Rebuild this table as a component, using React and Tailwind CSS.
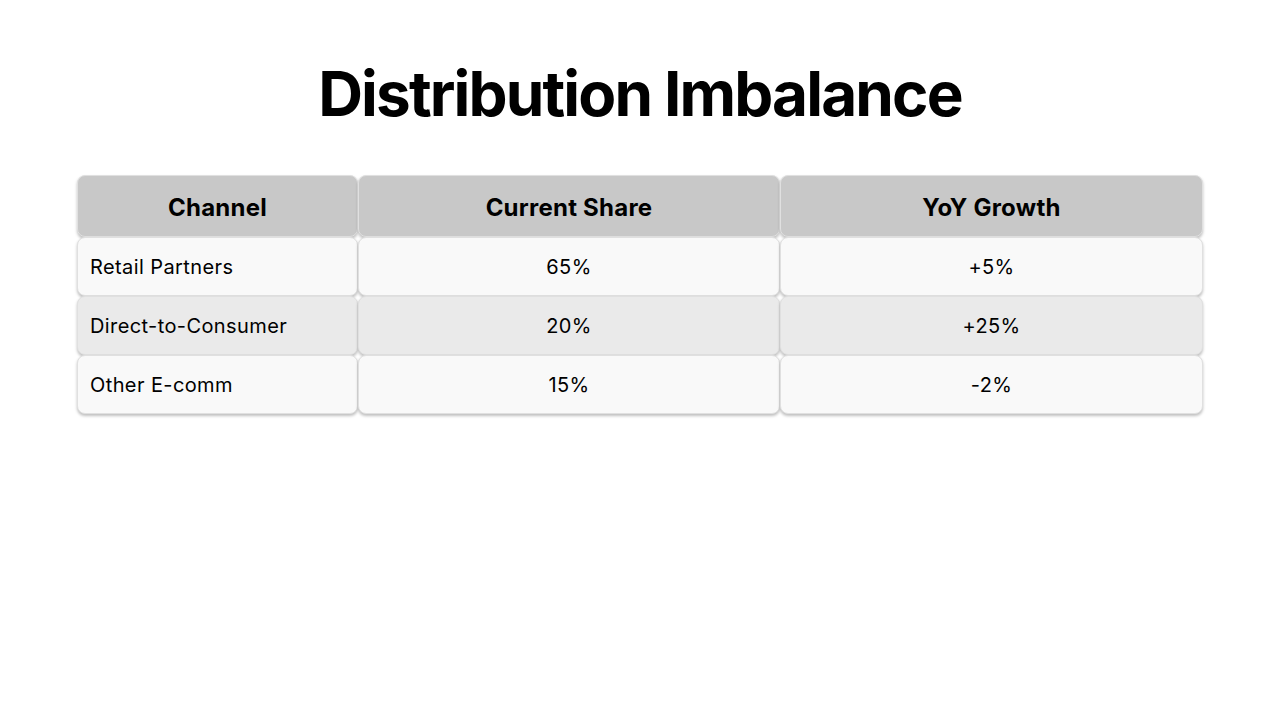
import React from 'react';

const rows = [
    { channel: 'Retail Partners', share: '65%', growth: '+5%' },
    { channel: 'Direct-to-Consumer', share: '20%', growth: '+25%' },
    { channel: 'Other E-comm', share: '15%', growth: '-2%' }
];

const cellBase = 'rounded-lg border border-[#e0e0e0] shadow-[0_2px_3px_rgba(0,0,0,0.25)] flex items-center';

const App = () => {
    return (
        <div className="w-[1280px] h-[720px] bg-white font-['Inter','Lato',sans-serif] text-black">
            {/* Title */}
            <h1 className="pt-[57px] text-center text-[62px] leading-[74px] font-bold tracking-[-0.03em]">Distribution Imbalance</h1>

            {/* Table */}
            <div className="mt-[44px] mx-[77px] grid grid-cols-[281px_422px_423px]">
                {['Channel', 'Current Share', 'YoY Growth'].map((h) => (
                    <div key={h} className={`${cellBase} h-[62px] pt-1 bg-[#c8c8c8] justify-center text-[24px] font-bold tracking-[0.01em]`}>
                        {h}
                    </div>
                ))}
                {rows.map((r, i) => {
                    const bg = i % 2 === 1 ? 'bg-[#eaeaea]' : 'bg-[#f9f9f9]';
                    return (
                        <React.Fragment key={r.channel}>
                            <div className={`${cellBase} ${bg} h-[59px] pl-3 text-[20px] tracking-[0.02em]`}>{r.channel}</div>
                            <div className={`${cellBase} ${bg} h-[59px] justify-center text-[20px] tracking-[0.02em]`}>{r.share}</div>
                            <div className={`${cellBase} ${bg} h-[59px] justify-center text-[20px] tracking-[0.02em]`}>{r.growth}</div>
                        </React.Fragment>
                    );
                })}
            </div>
        </div>
    );
};

export default App;
